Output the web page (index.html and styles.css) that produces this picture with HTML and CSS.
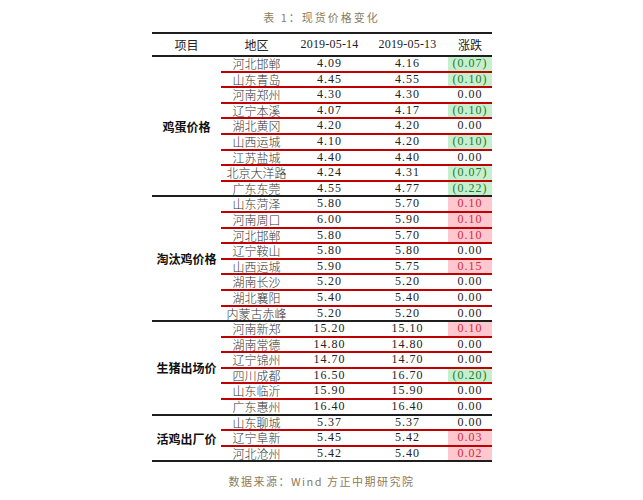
FILE: index.html
```html
<!DOCTYPE html>
<html lang="zh">
<head>
<meta charset="utf-8">
<title>现货价格变化</title>
<link rel="stylesheet" href="styles.css">
</head>
<body>
<div class="page">
  <div class="title">表 1：现货价格变化</div>
  <div class="table">
    <div class="head">
      <div class="h">项目</div>
      <div class="h">地区</div>
      <div class="h num">2019-05-14</div>
      <div class="h num">2019-05-13</div>
      <div class="h">涨跌</div>
    </div>

    <div class="group">
      <div class="label">鸡蛋价格</div>
      <div class="rows">
        <div class="row"><span class="area">河北邯郸</span><span class="num">4.09</span><span class="num">4.16</span><span class="num chg down">(0.07)</span></div>
        <div class="row"><span class="area">山东青岛</span><span class="num">4.45</span><span class="num">4.55</span><span class="num chg down">(0.10)</span></div>
        <div class="row"><span class="area">河南郑州</span><span class="num">4.30</span><span class="num">4.30</span><span class="num chg">0.00</span></div>
        <div class="row"><span class="area">辽宁本溪</span><span class="num">4.07</span><span class="num">4.17</span><span class="num chg down">(0.10)</span></div>
        <div class="row"><span class="area">湖北黄冈</span><span class="num">4.20</span><span class="num">4.20</span><span class="num chg">0.00</span></div>
        <div class="row"><span class="area">山西运城</span><span class="num">4.10</span><span class="num">4.20</span><span class="num chg down">(0.10)</span></div>
        <div class="row"><span class="area">江苏盐城</span><span class="num">4.40</span><span class="num">4.40</span><span class="num chg">0.00</span></div>
        <div class="row"><span class="area">北京大洋路</span><span class="num">4.24</span><span class="num">4.31</span><span class="num chg down">(0.07)</span></div>
        <div class="row"><span class="area">广东东莞</span><span class="num">4.55</span><span class="num">4.77</span><span class="num chg down">(0.22)</span></div>
      </div>
    </div>

    <div class="group">
      <div class="label">淘汰鸡价格</div>
      <div class="rows">
        <div class="row"><span class="area">山东菏泽</span><span class="num">5.80</span><span class="num">5.70</span><span class="num chg up">0.10</span></div>
        <div class="row"><span class="area">河南周口</span><span class="num">6.00</span><span class="num">5.90</span><span class="num chg up">0.10</span></div>
        <div class="row"><span class="area">河北邯郸</span><span class="num">5.80</span><span class="num">5.70</span><span class="num chg up">0.10</span></div>
        <div class="row"><span class="area">辽宁鞍山</span><span class="num">5.80</span><span class="num">5.80</span><span class="num chg">0.00</span></div>
        <div class="row"><span class="area">山西运城</span><span class="num">5.90</span><span class="num">5.75</span><span class="num chg up">0.15</span></div>
        <div class="row"><span class="area">湖南长沙</span><span class="num">5.20</span><span class="num">5.20</span><span class="num chg">0.00</span></div>
        <div class="row"><span class="area">湖北襄阳</span><span class="num">5.40</span><span class="num">5.40</span><span class="num chg">0.00</span></div>
        <div class="row"><span class="area">内蒙古赤峰</span><span class="num">5.20</span><span class="num">5.20</span><span class="num chg">0.00</span></div>
      </div>
    </div>

    <div class="group">
      <div class="label">生猪出场价</div>
      <div class="rows">
        <div class="row"><span class="area">河南新郑</span><span class="num">15.20</span><span class="num">15.10</span><span class="num chg up">0.10</span></div>
        <div class="row"><span class="area">湖南常德</span><span class="num">14.80</span><span class="num">14.80</span><span class="num chg">0.00</span></div>
        <div class="row"><span class="area">辽宁锦州</span><span class="num">14.70</span><span class="num">14.70</span><span class="num chg">0.00</span></div>
        <div class="row"><span class="area">四川成都</span><span class="num">16.50</span><span class="num">16.70</span><span class="num chg down">(0.20)</span></div>
        <div class="row"><span class="area">山东临沂</span><span class="num">15.90</span><span class="num">15.90</span><span class="num chg">0.00</span></div>
        <div class="row"><span class="area">广东惠州</span><span class="num">16.40</span><span class="num">16.40</span><span class="num chg">0.00</span></div>
      </div>
    </div>

    <div class="group">
      <div class="label">活鸡出厂价</div>
      <div class="rows">
        <div class="row"><span class="area">山东聊城</span><span class="num">5.37</span><span class="num">5.37</span><span class="num chg">0.00</span></div>
        <div class="row"><span class="area">辽宁阜新</span><span class="num">5.45</span><span class="num">5.42</span><span class="num chg up">0.03</span></div>
        <div class="row"><span class="area">河北沧州</span><span class="num">5.42</span><span class="num">5.40</span><span class="num chg up">0.02</span></div>
      </div>
    </div>
  </div>
  <div class="source">数据来源：Wind 方正中期研究院</div>
</div>
</body>
</html>
```

FILE: styles.css
```css
html, body {
  margin: 0;
  padding: 0;
  background: #ffffff;
}

.page {
  width: 643px;
  height: 500px;
  display: flex;
  flex-direction: column;
  align-items: center;
  font-family: "Noto Sans CJK SC", sans-serif;
  color: #222222;
}

.title {
  padding-top: 10px;
  height: 22px;
  line-height: 14px;
  font-size: 11px;
  letter-spacing: 2px;
  color: #8c7c5c;
}

.table {
  width: 340px;
  margin-left: 1px;
}

.head {
  display: grid;
  grid-template-columns: 69px 71px 75px 81px 44px;
  border-top: 2px solid #1e1e1e;
  border-bottom: 2px solid #1e1e1e;
  height: 21px;
  align-items: center;
  font-size: 12px;
}

.h {
  text-align: center;
  line-height: 21px;
}

.head .num {
  letter-spacing: 0.2px;
}

.num {
  font-family: "Liberation Serif", "Noto Sans CJK SC", serif;
  font-size: 12px;
  letter-spacing: 1px;
}

.group {
  display: grid;
  grid-template-columns: 69px 271px;
  border-bottom: 2px solid #1e1e1e;
}

.label {
  display: flex;
  align-items: center;
  justify-content: center;
  font-weight: 700;
  font-size: 12px;
  color: #111111;
}

.row {
  display: grid;
  grid-template-columns: 71px 75px 81px 44px;
  height: 13.6px;
  border-bottom: 2px solid #c00000;
  font-size: 12px;
  line-height: 13.6px;
}

.row:last-child {
  border-bottom: none;
}

.row span {
  text-align: center;
  white-space: nowrap;
}

.area {
  font-weight: 300;
  color: #333333;
}

.chg.down {
  background: #c6efce;
  color: #1f7a2e;
}

.chg.up {
  background: #ffc7ce;
  color: #d2293f;
}

.source {
  margin-top: 12px;
  line-height: 14px;
  font-size: 11px;
  letter-spacing: 1.5px;
  color: #8c7c5c;
}
```
